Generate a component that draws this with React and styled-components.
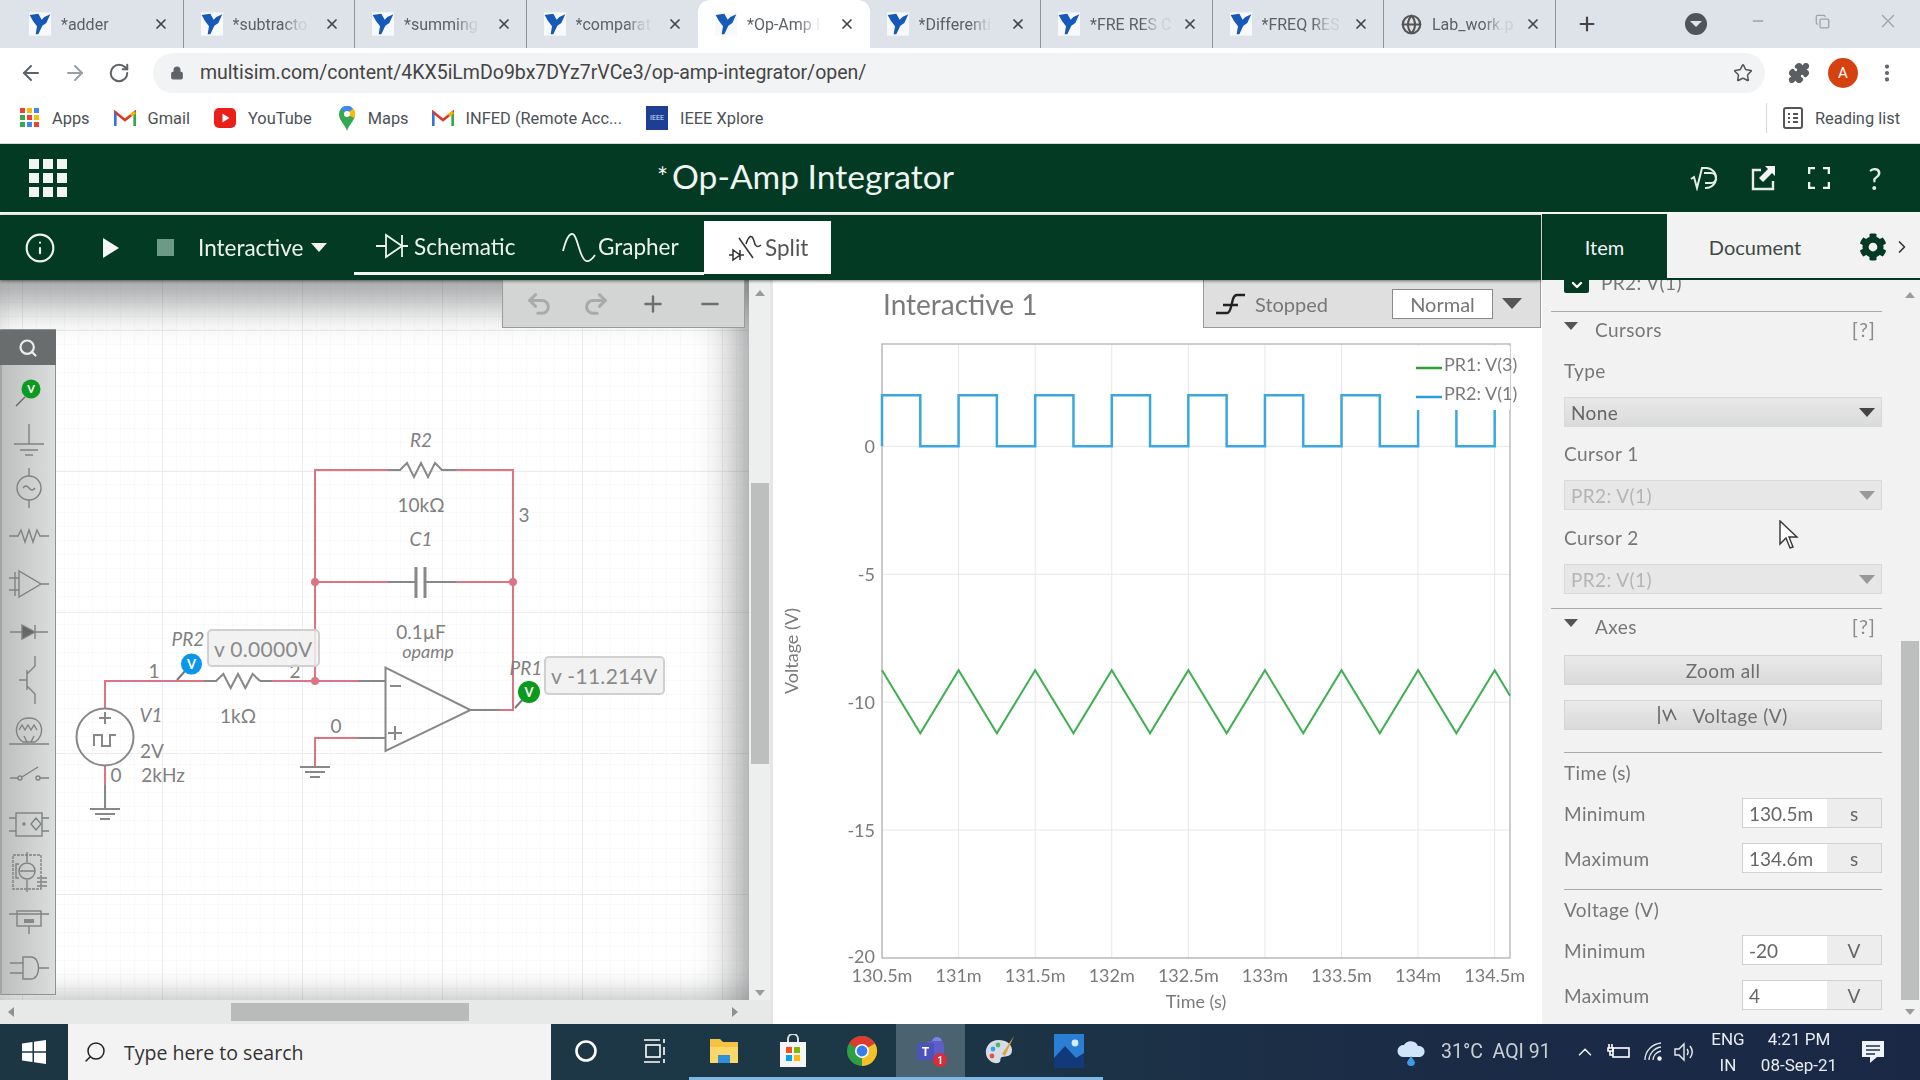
import React from "react";
import styled, { createGlobalStyle } from "styled-components";
import {
  ArrowLeft, ArrowRight, RotateCw, Lock, Star, Puzzle, MoreVertical, Plus, Minus, X,
  Search, Globe, ChevronDown, Undo2, Redo2, ChevronRight, ChevronUp, Info, Copy,
} from "lucide-react";
import { FaCog } from "react-icons/fa";

const GlobalStyle = createGlobalStyle`
  html, body { margin: 0; padding: 0; background: #fff; }
  * { box-sizing: border-box; }
`;

const GREEN = "#033a24";

const Page = styled.div`
  width: 1920px;
  height: 1080px;
  overflow: hidden;
  display: flex;
  flex-direction: column;
  font-family: "Lato", sans-serif;
  filter: blur(0.35px);
`;

/* browser chrome */
const TabStrip = styled.div`
  height: 48px;
  background: #dee3ea;
  display: flex;
  align-items: center;
  padding-left: 12px;
  font-family: "Roboto", sans-serif;
`;
const Tab = styled.div`
  width: 171.5px;
  height: 48px;
  display: flex;
  align-items: center;
  padding: 0 14px 0 17px;
  gap: 10px;
  position: relative;
  background: ${(p) => (p.$active ? "#fff" : "transparent")};
  border-radius: ${(p) => (p.$active ? "12px 12px 0 0" : "0")};
  border-right: 1px solid ${(p) => (p.$active || p.$noSep ? "transparent" : "#8f949b")};
`;
const TabText = styled.span`
  flex: 1;
  font-size: 16px;
  white-space: nowrap;
  overflow: hidden;
  color: #5c6168;
  mask-image: linear-gradient(90deg, #000 62%, rgba(0, 0, 0, .15) 84%);
`;
const NewTab = styled.div`
  width: 42px;
  margin-left: 10px;
  display: flex;
  justify-content: center;
  color: #444;
`;
const ProfileDot = styled.div`
  margin-left: auto;
  margin-right: 18px;
  width: 22px;
  height: 22px;
  border-radius: 50%;
  background: #50545a;
  display: flex;
  align-items: center;
  justify-content: center;
`;
const WinButton = styled.div`
  width: 65px;
  display: flex;
  justify-content: center;
  color: #9ca1a8;
  padding-bottom: 6px;
`;

const AddressRow = styled.div`
  height: 49px;
  background: #fff;
  display: flex;
  align-items: center;
  padding-left: 9px;
  font-family: "Roboto", sans-serif;
`;
const NavButton = styled.div`
  width: 44px;
  display: flex;
  justify-content: center;
  color: ${(p) => p.$color || "#5f6368"};
`;
const AddressBar = styled.div`
  width: 1612px;
  height: 40px;
  margin-left: 12px;
  margin-right: 12px;
  border-radius: 20px;
  background: #f1f3f4;
  display: flex;
  align-items: center;
  padding: 0 12px 0 17px;
  font-size: 19.5px;
  gap: 16px;
`;
const Url = styled.span`
  flex: 1;
  color: #444;
`;
const Avatar = styled.div`
  width: 30px;
  height: 30px;
  border-radius: 50%;
  background: #d5410f;
  color: #fff;
  font-size: 15px;
  display: flex;
  align-items: center;
  justify-content: center;
`;

const BookmarkRow = styled.div`
  height: 47px;
  background: #fff;
  display: flex;
  align-items: center;
  padding: 0 20px 4px 20px;
  font-family: "Roboto", sans-serif;
  font-size: 16.4px;
  color: #4d5156;
  border-bottom: 1px solid #d6dadd;
`;
const Bookmark = styled.div`
  display: flex;
  align-items: center;
  gap: 12px;
  margin-right: ${(p) => p.$gap || 22}px;
  white-space: nowrap;
`;
const ReadingList = styled.div`
  margin-left: auto;
  display: flex;
  align-items: center;
  gap: 12px;
  border-left: 1px solid #d6dadd;
  padding-left: 16px;
  height: 30px;
`;
const IeeeBadge = styled.span`
  width: 22px;
  height: 24px;
  background: #1c3f94;
  color: #dbe4ff;
  font-size: 7px;
  display: flex;
  align-items: center;
  justify-content: center;
`;

/* app header */
const AppHeader = styled.header`
  height: 68px;
  background: ${GREEN};
  display: flex;
  align-items: center;
  padding-left: 29px;
  color: #fff;
`;
const AppGrid = styled.div`
  width: 38px;
  height: 38px;
  display: grid;
  grid-template-columns: repeat(3, 10px);
  grid-template-rows: repeat(3, 10px);
  gap: 4px;
`;
const AppGridDot = styled.span`
  background: #f2f5f3;
`;
const Title = styled.h1`
  margin: 0 0 4px 590px;
  font-weight: 400;
  font-size: 33.6px;
  color: #f1f5f2;
  white-space: nowrap;
  span { font-size: 26px; margin-right: 4px; vertical-align: 2px; }
`;
const HeaderIcons = styled.div`
  margin-left: auto;
  display: flex;
  align-items: center;
  padding-right: 17px;
`;
const HeaderIcon = styled.div`
  width: 56px;
  display: flex;
  justify-content: center;
  font-size: 30px;
  color: #e6ece8;
`;
const WhiteLine = styled.div`
  height: 3px;
  background: #f3f6f4;
`;

/* main */
const Main = styled.main`
  height: 809px;
  display: flex;
`;
const WorkColumn = styled.div`
  width: 1541px;
  display: flex;
  flex-direction: column;
`;
const ModeBar = styled.div`
  height: 65px;
  background: ${GREEN};
  display: flex;
  align-items: flex-start;
  color: #eef3f0;
  font-size: 22.5px;
  box-shadow: 0 1px 3px rgba(0, 0, 0, .5);
  position: relative;
  z-index: 2;
`;
const ModeIcon = styled.div`
  width: ${(p) => p.$w}px;
  height: 65px;
  display: flex;
  align-items: center;
  justify-content: center;
  flex: none;
`;
const StopBox = styled.div`
  width: 17px;
  height: 17px;
  background: #6d9a86;
`;
const Caret = styled.span`
  width: 0;
  height: 0;
  border-left: ${(p) => p.$s || 8}px solid transparent;
  border-right: ${(p) => p.$s || 8}px solid transparent;
  border-top: ${(p) => (p.$s || 8) * 1.15}px solid ${(p) => p.$color || "#eef3f0"};
  flex: none;
`;
const InteractiveLabel = styled.div`
  width: 166px;
  height: 65px;
  padding-left: 10px;
  display: flex;
  align-items: center;
  gap: 8px;
  flex: none;
`;
const ViewGroup = styled.div`
  display: flex;
  height: 60px;
  width: 350px;
  padding-top: 5px;
  border-bottom: 3px solid #f3f6f4;
  flex: none;
`;
const ViewTab = styled.div`
  display: flex;
  align-items: center;
  gap: ${(p) => p.$gap}px;
  padding-left: ${(p) => p.$pad}px;
  width: ${(p) => p.$w}px;
`;
const SplitTab = styled.div`
  width: 127px;
  height: 53px;
  margin-top: 6px;
  background: #fff;
  color: #555;
  display: flex;
  align-items: center;
  padding-left: 25px;
  gap: 3px;
`;
const Panes = styled.div`
  flex: 1;
  display: flex;
  min-height: 0;
`;

/* schematic pane */
const CircuitPane = styled.section`
  width: 770px;
  display: flex;
  flex-direction: column;
  background: #e9ebea;
`;
const CircuitRow = styled.div`
  height: 720px;
  display: flex;
`;
const Viewport = styled.div`
  width: 749px;
  height: 720px;
  position: relative;
  overflow: hidden;
  background-color: #fff;
  background-image:
    linear-gradient(#ececec 1px, transparent 1px),
    linear-gradient(90deg, #ececec 1px, transparent 1px),
    linear-gradient(rgba(0,0,0,.018) 1px, transparent 1px),
    linear-gradient(90deg, rgba(0,0,0,.018) 1px, transparent 1px);
  background-size: 140px 141px, 140px 141px, 14px 14px, 14px 14px;
  background-position: 22px 50px, 22px 50px, 22px 50px, 22px 50px;
  box-shadow:
    inset 0 44px 36px -18px rgba(80, 84, 86, .5),
    inset -44px 0 36px -26px rgba(80, 84, 86, .42),
    inset 0 -26px 26px -18px rgba(80, 84, 86, .3);
`;
const CircuitSvg = styled.svg`
  position: absolute;
  left: 0;
  top: 0;
`;
const CircuitText = styled.text`
  font-family: "Lato", sans-serif;
  font-size: ${(p) => p.$size || 19}px;
  font-style: ${(p) => (p.$italic ? "italic" : "normal")};
  fill: #808080;
  text-anchor: ${(p) => p.$anchor || "middle"};
  dominant-baseline: central;
`;
const CanvasTools = styled.div`
  position: absolute;
  left: 502px;
  top: 0;
  width: 243px;
  height: 48px;
  background: #d3d4d4;
  border: 1px solid #9a9a9a;
  border-top: 0;
  display: flex;
  align-items: center;
  padding-left: 22px;
  gap: 29px;
`;
const ToolGlyph = styled.div`
  width: 28px;
  display: flex;
  justify-content: center;
  color: ${(p) => p.$color};
`;
const Palette = styled.div`
  position: absolute;
  left: 0;
  top: 49px;
  width: 56px;
  height: 666px;
  background: linear-gradient(90deg, #bdbfbf, #dcdddd);
  border: 1px solid #8e9191;
  border-left: 2px solid #a3a5a5;
`;
const PaletteSearch = styled.div`
  height: 35px;
  background: #696d6e;
  display: flex;
  align-items: center;
  justify-content: center;
  color: #eceeee;
  margin: 0 -1px 3px -2px;
`;
const PaletteCell = styled.div`
  height: 48px;
  display: flex;
  align-items: center;
  justify-content: center;
`;
const ValueTip = styled.div`
  position: absolute;
  left: ${(p) => p.$x}px;
  top: ${(p) => p.$y}px;
  width: ${(p) => p.$w}px;
  height: ${(p) => p.$h}px;
  border: 2px solid #d0d0d0;
  border-radius: 5px;
  background: rgba(240, 240, 240, .86);
  color: #8a8a8a;
  font-size: 21px;
  display: flex;
  align-items: center;
  padding-left: 5px;
  white-space: nowrap;
  letter-spacing: .3px;
`;
const VScroll = styled.div`
  width: 21px;
  height: 720px;
  display: flex;
  flex-direction: column;
  align-items: center;
  background: #ecefee;
  padding-top: 10px;
`;
const ScrollThumbV = styled.div`
  width: 18px;
  height: ${(p) => p.$h}px;
  margin-top: ${(p) => p.$top}px;
  background: #bcbfbe;
`;
const UpArrow = styled.span`
  width: 0;
  height: 0;
  border-left: 5px solid transparent;
  border-right: 5px solid transparent;
  border-bottom: 6px solid #9a9c9c;
`;
const DownArrow = styled(UpArrow)`
  margin-top: ${(p) => p.$top || 0}px;
  transform: rotate(180deg);
`;
const HScroll = styled.div`
  height: 24px;
  display: flex;
  align-items: center;
  padding-left: 8px;
  background: #e7e9e8;
`;
const ScrollThumbH = styled.div`
  width: 238px;
  height: 18px;
  margin-left: 217px;
  background: #b8bbba;
`;
const SideArrow = styled.span`
  width: 0;
  height: 0;
  border-top: 5px solid transparent;
  border-bottom: 5px solid transparent;
  border-${(p) => (p.$right ? "left" : "right")}: 6px solid #8f9191;
  margin-left: ${(p) => p.$left || 0}px;
`;

/* chart pane */
const ChartPane = styled.section`
  flex: 1;
  background: #fff;
  border-left: 3px solid #e4e6e5;
  display: flex;
  flex-direction: column;
`;
const ChartHead = styled.div`
  height: 48px;
  display: flex;
  align-items: center;
  padding-left: 110px;
`;
const ChartTitle = styled.div`
  font-size: 28px;
  color: #7b7b7b;
`;
const RunState = styled.div`
  margin-left: auto;
  width: 338px;
  height: 48px;
  background: #dfdfdf;
  border: 1px solid #9a9a9a;
  border-top: 0;
  display: flex;
  align-items: center;
  padding-left: 12px;
  font-size: 20px;
  color: #777;
`;
const RunLabel = styled.span`
  width: 137px;
  margin-left: 9px;
`;
const ModeBox = styled.div`
  width: 101px;
  height: 30px;
  background: #fff;
  border: 1px solid #8a8a8a;
  display: flex;
  align-items: center;
  justify-content: center;
  margin-right: 9px;
`;
const ChartSvg = styled.svg`
  display: block;
`;
const ChartText = styled.text`
  font-family: "Lato", sans-serif;
  font-size: 18px;
  fill: ${(p) => p.$color || "#7a7a7a"};
  text-anchor: ${(p) => p.$anchor || "middle"};
  dominant-baseline: central;
`;

/* right panel */
const SidePanel = styled.aside`
  width: 379px;
  background: #f1f2f1;
  display: flex;
  flex-direction: column;
  border-left: 1px solid #fff;
  color: #777;
  font-size: 19px;
  letter-spacing: .4px;
`;
const SideTabs = styled.div`
  height: 65px;
  display: flex;
  align-items: center;
  border-bottom: 2px solid ${GREEN};
  background: #f1f2f1;
  font-size: 20px;
  letter-spacing: 0;
`;
const SideTab = styled.div`
  width: ${(p) => p.$w}px;
  height: 65px;
  display: flex;
  align-items: center;
  justify-content: center;
  background: ${(p) => (p.$active ? GREEN : "transparent")};
  color: ${(p) => (p.$active ? "#f1f5f2" : "#3f4a45")};
`;
const GearTab = styled.div`
  width: 77px;
  height: 63px;
  padding-left: 16px;
  display: flex;
  align-items: center;
  gap: 5px;
`;
const SideRow = styled.div`
  flex: 1;
  display: flex;
  min-height: 0;
`;
const SideBody = styled.div`
  width: 358px;
  padding-left: 9px;
  position: relative;
`;
const ClippedRow = styled.div`
  height: 13px;
  overflow: hidden;
  display: flex;
  align-items: flex-end;
  padding-left: 13px;
  gap: 12px;
  color: #777;
`;
const CheckBox = styled.span`
  width: 25px;
  height: 25px;
  background: ${GREEN};
  border-radius: 2px;
  color: #fff;
  flex: none;
  display: flex;
  align-items: flex-end;
  justify-content: center;
`;
const ClippedText = styled.span`
  line-height: 18px;
  margin-bottom: 1px;
`;
const Divider = styled.hr`
  height: 1px;
  border: 0;
  background: #a9abaa;
  margin: ${(p) => p.$top || 0}px 0 0 ${(p) => p.$left || 0}px;
  width: ${(p) => 331 - (p.$left || 0)}px;
`;
const SectionHead = styled.div`
  height: 36px;
  display: flex;
  align-items: center;
  padding: 0 0 2px 13px;
  width: 331px;
`;
const SectionCaret = styled(Caret)`
  margin-bottom: 6px;
`;
const SectionName = styled.span`
  margin-left: 17px;
  flex: 1;
`;
const HelpMark = styled.span`
  font-size: 20px;
  color: #8b8b8b;
  margin-right: 6px;
  letter-spacing: 1px;
`;
const FieldLabel = styled.div`
  height: ${(p) => p.$h}px;
  margin-bottom: ${(p) => p.$after || 0}px;
  padding: 0 0 ${(p) => p.$lift || 0}px 13px;
  display: flex;
  align-items: center;
`;
const Select = styled.div`
  width: 318px;
  height: 30px;
  margin-left: 13px;
  background: ${(p) => (p.$disabled ? "#e6e7e6" : "linear-gradient(#e7e8e7, #d9dada)")};
  border: 1px solid #d8d9d8;
  display: flex;
  align-items: center;
  justify-content: space-between;
  padding: 0 6px;
  color: ${(p) => (p.$disabled ? "#b4b5b4" : "#666")};
`;
const ActionButton = styled.div`
  width: 318px;
  height: 30px;
  margin: ${(p) => p.$top}px 0 0 13px;
  background: linear-gradient(#e9eae9, #d8d9d8);
  border: 1px solid #d3d4d3;
  display: flex;
  align-items: center;
  justify-content: center;
  gap: 10px;
  color: #6f6f6f;
`;
const NumberRow = styled.div`
  height: 30px;
  width: 332px;
  margin-top: ${(p) => p.$top || 0}px;
  padding-left: 13px;
  display: flex;
  align-items: center;
`;
const NumberLabel = styled.span`
  width: 178px;
  flex: none;
`;
const NumberField = styled.div`
  width: 140px;
  height: 30px;
  border: 1px solid #d0d1d0;
  display: flex;
  background: #ecedec;
  color: #666;
  letter-spacing: 0;
`;
const NumberValue = styled.span`
  width: 84px;
  background: #fff;
  display: flex;
  align-items: center;
  padding-left: 6px;
`;
const NumberUnit = styled.span`
  flex: 1;
  display: flex;
  align-items: center;
  justify-content: center;
`;
const PointerWrap = styled.div`
  position: absolute;
  left: 237px;
  top: 240px;
`;
const SideScroll = styled.div`
  width: 21px;
  display: flex;
  flex-direction: column;
  align-items: center;
  padding-top: 12px;
`;

/* taskbar */
const Taskbar = styled.footer`
  height: 56px;
  background: linear-gradient(90deg, #1d3644 0%, #1c3746 45%, #1b2b46 75%, #1a2845 100%);
  display: flex;
  align-items: stretch;
  color: #e8edf2;
  font-family: "Roboto", sans-serif;
`;
const StartCell = styled.div`
  width: 68px;
  display: flex;
  align-items: center;
  justify-content: center;
`;
const SearchBox = styled.div`
  width: 483px;
  background: #f3f3f3;
  color: #333;
  display: flex;
  align-items: center;
  padding-left: 15px;
  gap: 17px;
  font-family: "Open Sans", sans-serif;
  font-size: 19.5px;
`;
const TaskCell = styled.div`
  width: 69px;
  display: flex;
  align-items: center;
  justify-content: center;
  background: ${(p) => (p.$active ? "#4b6270" : "transparent")};
  border-bottom: 3px solid ${(p) => (p.$running ? "#7fb8e6" : "transparent")};
`;
const Tray = styled.div`
  margin-left: auto;
  display: flex;
  align-items: stretch;
  padding-right: 11px;
  font-size: 17px;
`;
const TrayCell = styled.div`
  width: ${(p) => p.$w}px;
  display: flex;
  flex-direction: column;
  align-items: ${(p) => (p.$start ? "flex-start" : "center")};
  justify-content: center;
  padding-left: ${(p) => p.$pad || 0}px;
  line-height: 26px;
  white-space: nowrap;
  font-size: ${(p) => p.$size || 17}px;
  color: ${(p) => p.$color || "#e8edf2"};
`;

const TABS = [
  { label: "*adder" },
  { label: "*subtracto" },
  { label: "*summing" },
  { label: "*comparat", noSep: true },
  { label: "*Op-Amp I", active: true, noSep: true },
  { label: "*Differenti" },
  { label: "*FRE RES C" },
  { label: "*FREQ RES" },
  { label: "Lab_work.p", globe: true },
];

const X_TICKS = ["130.5m", "131m", "131.5m", "132m", "132.5m", "133m", "133.5m", "134m", "134.5m"];
const Y_TICKS = [0, -5, -10, -15, -20];

const px = (ms) => 882 + (ms - 130.5) * (628 / 4.1);
const py = (v) => 958 - (v + 20) * (614 / 24);

function squarePath() {
  let d = `M${px(130.5)} ${py(0)}`;
  for (let i = 0; i < 8; i++) {
    const t = 130.5 + i * 0.5;
    d += ` L${px(t)} ${py(2)} L${px(t + 0.25)} ${py(2)} L${px(t + 0.25)} ${py(0)} L${px(t + 0.5)} ${py(0)}`;
  }
  d += ` L${px(134.5)} ${py(2)} L${px(134.6)} ${py(2)}`;
  return d;
}

function trianglePath() {
  let d = `M${px(130.5)} ${py(-8.75)}`;
  for (let i = 0; i < 8; i++) {
    const t = 130.5 + i * 0.5;
    d += ` L${px(t + 0.25)} ${py(-11.22)} L${px(t + 0.5)} ${py(-8.75)}`;
  }
  d += ` L${px(134.6)} ${py(-9.75)}`;
  return d;
}

function zigzag(cx, y, half) {
  const step = (half * 2) / 6;
  const pts = [];
  for (let i = 0; i <= 6; i++) {
    const off = i === 0 || i === 6 ? 0 : i % 2 ? -7 : 7;
    pts.push(`${cx - half + i * step} ${y + off}`);
  }
  return `M${pts.join(" L")}`;
}

function Ground({ x, y }) {
  return (
    <g stroke="#888" strokeWidth="2">
      <path d={`M${x - 15} ${y} H${x + 15}`} />
      <path d={`M${x - 10} ${y + 5} H${x + 10}`} />
      <path d={`M${x - 5} ${y + 10} H${x + 5}`} />
    </g>
  );
}

function Schematic() {
  const red = "#dc7484";
  const grey = "#888";
  return (
    <CircuitSvg width="749" height="720" viewBox="0 0 749 720" fill="none">
      <g stroke={red} strokeWidth="2">
        <path d="M388 190 H315 V401" />
        <path d="M456 190 H513 V430 H500" />
        <path d="M388 302 H315" />
        <path d="M456 302 H513" />
        <path d="M105 428 V401 H204" />
        <path d="M272 401 H358" />
        <path d="M358 458 H315 V486" />
        <path d="M105 486 V505" />
      </g>
      <g stroke={grey} strokeWidth="2">
        <path d="M388 190 H401" />
        <path d={zigzag(421, 190, 21)} />
        <path d="M441 190 H456" />
        <path d="M388 302 H416" />
        <path d="M425 302 H456" />
        <path d="M416 287 V318" strokeWidth="3" />
        <path d="M425 287 V318" strokeWidth="3" />
        <path d="M204 401 H217" />
        <path d={zigzag(238, 401, 22)} />
        <path d="M260 401 H272" />
        <path d="M358 401 H385" />
        <path d="M358 458 H385" />
        <path d="M470 430 H500" />
        <path d="M385.5 387.5 V471 L470.5 430 Z" />
        <path d="M390 406 H401" />
        <path d="M388 453 H402 M395 446 V460" />
        <circle cx="105" cy="457" r="28.5" />
        <path d="M105 505 V529" />
        <path d="M99 438 H111 M105 432 V444" />
        <path d="M94 466 V455 H102 V466 H110 V455 H116" />
      </g>
      <Ground x={105} y={529} />
      <Ground x={315} y={487} />
      <circle cx="315" cy="302" r="4" fill={red} />
      <circle cx="513" cy="302" r="4" fill={red} />
      <circle cx="315" cy="401" r="4" fill={red} />

      <CircuitText x="421" y="159" $italic>R2</CircuitText>
      <CircuitText x="421" y="224">10kΩ</CircuitText>
      <CircuitText x="421" y="258" $italic>C1</CircuitText>
      <CircuitText x="524" y="234">3</CircuitText>
      <CircuitText x="421" y="351">0.1µF</CircuitText>
      <CircuitText x="428" y="371" $italic $size={18}>opamp</CircuitText>
      <CircuitText x="154" y="390">1</CircuitText>
      <CircuitText x="295" y="390">2</CircuitText>
      <CircuitText x="238" y="435">1kΩ</CircuitText>
      <CircuitText x="336" y="445">0</CircuitText>
      <CircuitText x="151" y="434" $italic>V1</CircuitText>
      <CircuitText x="152" y="470">2V</CircuitText>
      <CircuitText x="116" y="494">0</CircuitText>
      <CircuitText x="163" y="494">2kHz</CircuitText>
      <CircuitText x="188" y="358" $italic>PR2</CircuitText>
      <CircuitText x="526" y="387" $italic>PR1</CircuitText>

      <path d="M177 400 L186 390" stroke="#777" strokeWidth="2" />
      <circle cx="191.5" cy="384" r="10.5" fill="#0a96ea" />
      <text x="191.5" y="389" textAnchor="middle" fontFamily="Lato" fontWeight="700" fontSize="13" fill="#fff">V</text>
      <path d="M515 428 L524 418" stroke="#777" strokeWidth="2" />
      <circle cx="529" cy="412" r="11" fill="#0b9a1c" />
      <text x="529" y="417" textAnchor="middle" fontFamily="Lato" fontWeight="700" fontSize="13" fill="#fff">V</text>
    </CircuitSvg>
  );
}

function PaletteIcon({ kind }) {
  const common = { width: 44, height: 44, viewBox: "0 0 44 44", fill: "none", stroke: "#7f8282", strokeWidth: 1.4 };
  if (kind === "probe")
    return (
      <svg {...common}>
        <path d="M9 36 L18 27" stroke="#666" />
        <circle cx="24" cy="19" r="9.5" fill="#0c9a20" stroke="none" />
        <text x="24" y="23" textAnchor="middle" fontFamily="Lato" fontWeight="700" fontSize="11" fill="#fff" stroke="none">V</text>
      </svg>
    );
  if (kind === "ground")
    return (
      <svg {...common}>
        <path d="M22 6 V26 M7 26 H37 M13 32 H31 M18 37 H26" />
      </svg>
    );
  if (kind === "source")
    return (
      <svg {...common}>
        <circle cx="22" cy="22" r="12" />
        <path d="M22 2 V10 M22 34 V42 M16 22 q3 -4 6 0 t6 0" />
      </svg>
    );
  if (kind === "resistor")
    return (
      <svg {...common}>
        <path d="M2 22 H11 L14 16 L18 28 L22 16 L26 28 L30 16 L33 22 H42" />
      </svg>
    );
  if (kind === "opamp")
    return (
      <svg {...common}>
        <path d="M12 9 V35 L34 22 Z M2 16 H12 M2 28 H12 M34 22 H42 M8 10 V34" />
      </svg>
    );
  if (kind === "diode")
    return (
      <svg {...common}>
        <path d="M3 22 H41" />
        <path d="M15 15 L28 22 L15 29 Z" fill="#666" />
        <path d="M28 15 V29" />
      </svg>
    );
  if (kind === "bjt")
    return (
      <svg {...common} height="52" viewBox="0 -4 44 52">
        <path d="M12 22 H20 M20 12 V32 M20 16 L28 8 V-2 M20 28 L28 36 V46" />
      </svg>
    );
  if (kind === "lamp")
    return (
      <svg {...common}>
        <path d="M2 38 H42" />
        <path d="M16 36 C6 30 7 12 22 12 C37 12 38 30 28 36 Z" />
        <path d="M12 24 l3 -5 l3 5 l3 -5 l3 5 l3 -5 l3 5 M17 30 l3 6 M27 30 l-3 6" />
      </svg>
    );
  if (kind === "switch")
    return (
      <svg {...common}>
        <path d="M3 24 H11 M15 23 L31 13 M33 24 H42" />
        <circle cx="13" cy="24" r="2" />
        <circle cx="31" cy="24" r="2" />
      </svg>
    );
  if (kind === "controlled")
    return (
      <svg {...common}>
        <rect x="9" y="11" width="26" height="23" />
        <path d="M2 16 H9 M2 29 H9 M35 16 H42 M35 29 H42 M24 22 L29 16 L34 22 L29 28 Z" />
        <circle cx="17" cy="22" r="1" />
      </svg>
    );
  if (kind === "module")
    return (
      <svg {...common}>
        <rect x="6" y="5" width="28" height="34" strokeDasharray="3 1" />
        <circle cx="20" cy="21" r="8" />
        <path d="M12 21 H28 M20 2 V12 M20 30 V42 M30 28 H40 M30 32 H40 M30 36 H40 M12 14 H9 V28 H12" />
      </svg>
    );
  if (kind === "ic")
    return (
      <svg {...common}>
        <rect x="10" y="13" width="24" height="15" />
        <path d="M2 16 H42 M22 28 V36" />
        <rect x="17" y="21" width="10" height="4" fill="#888" stroke="none" />
      </svg>
    );
  return (
    <svg {...common}>
      <path d="M16 11 H24 C34 11 34 33 24 33 H16 Z M3 17 H16 M3 27 H16 M31 22 H42" />
    </svg>
  );
}

function MultisimLogo() {
  return (
    <svg width="22" height="24" viewBox="0 0 66 70" style={{ flex: "none" }}>
      <rect width="66" height="70" fill="#f7f9fc" />
      <path d="M2 8 L28 4 L38 22 L46 14 L64 6 L52 32 L40 40 L28 66 L20 66 L24 42 L12 26 Z" fill="#1659b8" />
    </svg>
  );
}

function GmailIcon() {
  return (
    <svg width="22" height="17" viewBox="0 0 22 17" fill="none">
      <path d="M1 16 V2 L11 10 L21 2 V16" stroke="#d93a2d" strokeWidth="2.6" />
      <path d="M1 16 V3" stroke="#2a77e0" strokeWidth="3" />
      <path d="M21 16 V3" stroke="#2fa84f" strokeWidth="3" />
      <path d="M17 5.5 L21 2" stroke="#f4b400" strokeWidth="3" />
    </svg>
  );
}

function ChromeIcon() {
  return (
    <svg width="32" height="32" viewBox="0 0 32 32">
      <circle cx="16" cy="16" r="15" fill="#2f9e44" />
      <path d="M16 1 A15 15 0 0 1 29 8.5 L16 16 L3 8.5 A15 15 0 0 1 16 1" fill="#dc3b2e" />
      <path d="M29 8.5 A15 15 0 0 1 16 31 L16 16 Z" fill="#f6c026" />
      <circle cx="16" cy="16" r="7" fill="#fff" />
      <circle cx="16" cy="16" r="5.4" fill="#3b7de8" />
    </svg>
  );
}

export default function App() {
  return (
    <Page>
      <GlobalStyle />
      <TabStrip>
        {TABS.map((t) => (
          <Tab key={t.label} $active={t.active} $noSep={t.noSep}>
            {t.globe ? <Globe size={21} color="#555" strokeWidth={2.4} style={{ flex: "none" }} /> : <MultisimLogo />}
            <TabText>{t.label}</TabText>
            <X size={16} strokeWidth={2.6} color="#454545" style={{ flex: "none" }} />
          </Tab>
        ))}
        <NewTab><Plus size={22} strokeWidth={2.4} /></NewTab>
        <ProfileDot><Caret $s={6} $color="#dee3ea" /></ProfileDot>
        <WinButton><Minus size={16} /></WinButton>
        <WinButton><Copy size={15} /></WinButton>
        <WinButton><X size={22} strokeWidth={1.4} /></WinButton>
      </TabStrip>

      <AddressRow>
        <NavButton><ArrowLeft size={24} strokeWidth={2} /></NavButton>
        <NavButton $color="#9aa0a6"><ArrowRight size={24} strokeWidth={2} /></NavButton>
        <NavButton><RotateCw size={22} strokeWidth={2.2} /></NavButton>
        <AddressBar>
          <Lock size={14} fill="#5f6368" color="#5f6368" />
          <Url>multisim.com/content/4KX5iLmDo9bx7DYz7rVCe3/op-amp-integrator/open/</Url>
          <Star size={20} color="#555" strokeWidth={1.8} />
        </AddressBar>
        <NavButton $color="#5b5f63"><Puzzle size={22} fill="#5b5f63" /></NavButton>
        <NavButton><Avatar>A</Avatar></NavButton>
        <NavButton><MoreVertical size={22} strokeWidth={2.6} /></NavButton>
      </AddressRow>

      <BookmarkRow>
        <Bookmark $gap={24}>
          <svg width="20" height="20" viewBox="0 0 20 20">
            {[0, 7, 14].map((y, r) =>
              [0, 7, 14].map((x, c) => (
                <rect key={`${r}${c}`} x={x} y={y} width="5" height="5"
                  fill={["#ea4335", "#fbbc05", "#4285f4", "#34a853", "#ea4335", "#fbbc05", "#34a853", "#4285f4", "#ea4335"][r * 3 + c]} />
              ))
            )}
          </svg>
          Apps
        </Bookmark>
        <Bookmark $gap={24}><GmailIcon />Gmail</Bookmark>
        <Bookmark $gap={26}>
          <svg width="22" height="20" viewBox="0 0 22 20">
            <rect width="22" height="20" rx="5" fill="#e9201a" />
            <path d="M8.5 5.5 L15.5 10 L8.5 14.5 Z" fill="#fff" />
          </svg>
          YouTube
        </Bookmark>
        <Bookmark $gap={23}>
          <svg width="18" height="26" viewBox="0 0 18 26">
            <path d="M9 26 C7 19 1 16 1 9 A8 8 0 0 1 17 9 C17 16 11 19 9 26 Z" fill="#34a853" />
            <path d="M3 3.5 A8 8 0 0 1 15 3.5 L9 9 Z" fill="#4285f4" />
            <path d="M15 3.5 A8 8 0 0 1 16 13 L9 9 Z" fill="#fbbc05" />
            <circle cx="9" cy="9" r="3" fill="#fff" />
          </svg>
          Maps
        </Bookmark>
        <Bookmark $gap={24}><GmailIcon />INFED (Remote Acc...</Bookmark>
        <Bookmark><IeeeBadge>IEEE</IeeeBadge>IEEE Xplore</Bookmark>
        <ReadingList>
          <svg width="20" height="24" viewBox="0 0 20 24" fill="none" stroke="#555" strokeWidth="2">
            <rect x="1" y="2" width="18" height="20" rx="2" />
            <path d="M5 8 H7 M10 8 H15 M5 12 H7 M10 12 H15 M5 16 H7 M10 16 H15" />
          </svg>
          Reading list
        </ReadingList>
      </BookmarkRow>

      <AppHeader>
        <AppGrid>{Array.from({ length: 9 }, (_, i) => <AppGridDot key={i} />)}</AppGrid>
        <Title><span>*</span>Op-Amp Integrator</Title>
        <HeaderIcons>
          <HeaderIcon>
            <svg width="34" height="26" viewBox="0 0 34 26" fill="none" stroke="#e6ece8" strokeWidth="2">
              <path d="M1 14 L4 12 L7 23 L12 3 H17" />
              <path d="M17 3 A10 10 0 1 1 15 23" />
              <path d="M14 8 H21 A5 5 0 0 1 21 18 H15" />
            </svg>
          </HeaderIcon>
          <HeaderIcon>
            <svg width="24" height="26" viewBox="0 0 24 26" fill="none">
              <path d="M10 5 H2 V24 H22 V16" stroke="#e6ece8" strokeWidth="2.4" />
              <path d="M14 1 H24 V11 L21 8 L12 17 L8 13 L17 4 Z" fill="#f4f7f5" />
            </svg>
          </HeaderIcon>
          <HeaderIcon>
            <svg width="22" height="22" viewBox="0 0 22 22" fill="none" stroke="#eef2ef" strokeWidth="2.6">
              <path d="M1 7 V1 H7 M15 1 H21 V7 M21 15 V21 H15 M7 21 H1 V15" />
            </svg>
          </HeaderIcon>
          <HeaderIcon>?</HeaderIcon>
        </HeaderIcons>
      </AppHeader>
      <WhiteLine />

      <Main>
        <WorkColumn>
          <ModeBar>
            <ModeIcon $w={80}><Info size={32} strokeWidth={1.6} /></ModeIcon>
            <ModeIcon $w={62}>
              <svg width="16" height="20" viewBox="0 0 16 20"><path d="M0 0 L16 10 L0 20 Z" fill="#f3f6f4" /></svg>
            </ModeIcon>
            <ModeIcon $w={46}><StopBox /></ModeIcon>
            <InteractiveLabel>Interactive<Caret /></InteractiveLabel>
            <ViewGroup>
              <ViewTab $w={203} $pad={22} $gap={6}>
                <svg width="32" height="30" viewBox="0 0 32 30" fill="none" stroke="#eef3f0" strokeWidth="1.8">
                  <path d="M0 15 H10 M10 4 V26 L26 15 Z M26 4 V26 M26 15 H32" />
                </svg>
                Schematic
              </ViewTab>
              <ViewTab $w={147} $pad={5} $gap={2}>
                <svg width="34" height="34" viewBox="0 0 34 34" fill="none" stroke="#eef3f0" strokeWidth="1.8">
                  <path d="M1 22 C5 6 9 3 12 6 C16 10 18 30 24 32 C28 33 31 29 33 26" />
                </svg>
                Grapher
              </ViewTab>
            </ViewGroup>
            <SplitTab>
              <svg width="33" height="28" viewBox="0 0 33 28" fill="none" stroke="#333" strokeWidth="1.5">
                <path d="M0 21 H4 M4 16 V26 L11 21 Z M11 16 V26 M11 21 H15" />
                <path d="M10 4 L24 24" />
                <path d="M17 10 C20 1 23 0 25 7 C26 12 28 14 32 11" />
              </svg>
              Split
            </SplitTab>
          </ModeBar>
          <Panes>
            <CircuitPane>
              <CircuitRow>
                <Viewport>
                  <Schematic />
                  <CanvasTools>
                    <ToolGlyph $color="#a9aaaa"><Undo2 size={28} strokeWidth={2.6} /></ToolGlyph>
                    <ToolGlyph $color="#a9aaaa"><Redo2 size={28} strokeWidth={2.6} /></ToolGlyph>
                    <ToolGlyph $color="#6d6f6f"><Plus size={26} strokeWidth={2.2} /></ToolGlyph>
                    <ToolGlyph $color="#6d6f6f"><Minus size={26} strokeWidth={2.2} /></ToolGlyph>
                  </CanvasTools>
                  <Palette>
                    <PaletteSearch><Search size={20} strokeWidth={2.6} /></PaletteSearch>
                    {["probe", "ground", "source", "resistor", "opamp", "diode", "bjt", "lamp", "switch", "controlled", "module", "ic", "gate"].map((k) => (
                      <PaletteCell key={k}><PaletteIcon kind={k} /></PaletteCell>
                    ))}
                  </Palette>
                  <ValueTip $x={207} $y={349} $w={113} $h={38}>v 0.0000V</ValueTip>
                  <ValueTip $x={544} $y={376} $w={121} $h={39}>v -11.214V</ValueTip>
                </Viewport>
                <VScroll>
                  <UpArrow />
                  <ScrollThumbV $h={281} $top={187} />
                  <DownArrow $top={226} />
                </VScroll>
              </CircuitRow>
              <HScroll>
                <SideArrow />
                <ScrollThumbH />
                <SideArrow $right $left={263} />
              </HScroll>
            </CircuitPane>

            <ChartPane>
              <ChartHead>
                <ChartTitle>Interactive 1</ChartTitle>
                <RunState>
                  <svg width="30" height="24" viewBox="0 0 30 24" fill="none" stroke="#222" strokeWidth="2.4">
                    <path d="M0 21 H11 C13 21 14 19 15 15 L17 7 C18 4 19 3 21 3 H29 M7 13 H22" />
                  </svg>
                  <RunLabel>Stopped</RunLabel>
                  <ModeBox>Normal</ModeBox>
                  <Caret $s={10} $color="#555" />
                </RunState>
              </ChartHead>
              <ChartSvg width="768" height="696" viewBox="773 328 768 696" fill="none">
                {X_TICKS.map((t, i) => {
                  const x = px(130.5 + i * 0.5);
                  return (
                    <g key={t}>
                      <path d={`M${x} 344 V958`} stroke="#e7e7e7" />
                      <ChartText x={x} y={975}>{t}</ChartText>
                    </g>
                  );
                })}
                {Y_TICKS.map((v) => (
                  <g key={v}>
                    <path d={`M882 ${py(v)} H1510`} stroke="#e7e7e7" />
                    <ChartText x={875} y={v === -20 ? 956 : py(v)} $anchor="end">{v}</ChartText>
                  </g>
                ))}
                <rect x="882" y="344" width="628" height="614" stroke="#bdbdbd" strokeWidth="1.5" />
                <path d={squarePath()} stroke="#3ba7de" strokeWidth="2.5" />
                <path d={trianglePath()} stroke="#3fb052" strokeWidth="2" />
                <rect x="1416" y="346" width="94" height="64" fill="#fff" />
                <path d="M1416 368 H1442" stroke="#2aa12c" strokeWidth="2.5" />
                <path d="M1416 397 H1442" stroke="#2a9ddb" strokeWidth="2.5" />
                <ChartText x={1444} y={364} $anchor="start">PR1: V(3)</ChartText>
                <ChartText x={1444} y={393} $anchor="start">PR2: V(1)</ChartText>
                <ChartText x={1196} y={1001}>Time (s)</ChartText>
                <ChartText x={791} y={651} transform="rotate(-90 791 651)">Voltage (V)</ChartText>
              </ChartSvg>
            </ChartPane>
          </Panes>
        </WorkColumn>

        <SidePanel>
          <SideTabs>
            <SideTab $w={125} $active>Item</SideTab>
            <SideTab $w={176}>Document</SideTab>
            <GearTab>
              <FaCog size={28} color={GREEN} />
              <ChevronRight size={20} color="#333" />
            </GearTab>
          </SideTabs>
          <SideRow>
            <SideBody>
              <ClippedRow>
                <CheckBox><ChevronDown size={16} strokeWidth={3.5} /></CheckBox>
                <ClippedText>PR2: V(1)</ClippedText>
              </ClippedRow>
              <Divider $top={18} />
              <SectionHead>
                <SectionCaret $s={7} $color="#555" />
                <SectionName>Cursors</SectionName>
                <HelpMark>[?]</HelpMark>
              </SectionHead>
              <FieldLabel $h={49} $lift={4}>Type</FieldLabel>
              <Select>None<Caret $s={8} $color="#444" /></Select>
              <FieldLabel $h={53}>Cursor 1</FieldLabel>
              <Select $disabled>PR2: V(1)<Caret $s={8} $color="#999" /></Select>
              <FieldLabel $h={54}>Cursor 2</FieldLabel>
              <Select $disabled>PR2: V(1)<Caret $s={8} $color="#999" /></Select>
              <Divider $top={14} />
              <SectionHead>
                <SectionCaret $s={7} $color="#555" />
                <SectionName>Axes</SectionName>
                <HelpMark>[?]</HelpMark>
              </SectionHead>
              <ActionButton $top={10}>Zoom all</ActionButton>
              <ActionButton $top={15}>
                <svg width="24" height="20" viewBox="0 0 24 20" fill="none" stroke="#666" strokeWidth="1.6">
                  <path d="M1 1 V19 M5 5 L9 15 L13 5 L18 15" />
                </svg>
                Voltage (V)
              </ActionButton>
              <Divider $top={22} $left={13} />
              <FieldLabel $h={38} $after={7}>Time (s)</FieldLabel>
              <NumberRow>
                <NumberLabel>Minimum</NumberLabel>
                <NumberField><NumberValue>130.5m</NumberValue><NumberUnit>s</NumberUnit></NumberField>
              </NumberRow>
              <NumberRow $top={15}>
                <NumberLabel>Maximum</NumberLabel>
                <NumberField><NumberValue>134.6m</NumberValue><NumberUnit>s</NumberUnit></NumberField>
              </NumberRow>
              <Divider $top={16} $left={13} />
              <FieldLabel $h={38} $after={7}>Voltage (V)</FieldLabel>
              <NumberRow>
                <NumberLabel>Minimum</NumberLabel>
                <NumberField><NumberValue>-20</NumberValue><NumberUnit>V</NumberUnit></NumberField>
              </NumberRow>
              <NumberRow $top={15}>
                <NumberLabel>Maximum</NumberLabel>
                <NumberField><NumberValue>4</NumberValue><NumberUnit>V</NumberUnit></NumberField>
              </NumberRow>
              <PointerWrap>
                <svg width="20" height="30" viewBox="0 0 20 30">
                  <path d="M1 1 V24 L7 18 L11 28 L14 27 L10 17 L18 17 Z" fill="#fff" stroke="#333" strokeWidth="1.4" />
                </svg>
              </PointerWrap>
            </SideBody>
            <SideScroll>
              <UpArrow />
              <ScrollThumbV $h={359} $top={343} />
              <DownArrow $top={9} />
            </SideScroll>
          </SideRow>
        </SidePanel>
      </Main>

      <Taskbar>
        <StartCell>
          <svg width="24" height="24" viewBox="0 0 24 24" fill="#fff">
            <path d="M0 3.5 L10.5 2 V11.3 H0 Z M12 1.8 L24 0 V11.3 H12 Z M0 12.7 H10.5 V22 L0 20.5 Z M12 12.7 H24 V24 L12 22.2 Z" />
          </svg>
        </StartCell>
        <SearchBox>
          <Search size={24} strokeWidth={1.5} color="#222" style={{ transform: "scaleX(-1)" }} />
          Type here to search
        </SearchBox>
        <TaskCell>
          <svg width="24" height="24" viewBox="0 0 24 24" fill="none" stroke="#fff" strokeWidth="2.6"><circle cx="12" cy="12" r="9.5" /></svg>
        </TaskCell>
        <TaskCell>
          <svg width="24" height="28" viewBox="0 0 24 28" fill="none" stroke="#fff" strokeWidth="1.6">
            <rect x="3" y="8" width="14" height="12" />
            <path d="M1 3 H17 M1 25 H17 M21 2 V6 M21 10 V18 M21 22 V26" />
          </svg>
        </TaskCell>
        <TaskCell $running>
          <svg width="30" height="30" viewBox="0 0 30 30">
            <path d="M1 3 H11 L14 6 H29 V27 H1 Z" fill="#f5c242" />
            <rect x="1" y="11" width="28" height="16" fill="#f9d769" />
            <rect x="9" y="19" width="12" height="8" fill="#2f8fd8" />
          </svg>
        </TaskCell>
        <TaskCell $running>
          <svg width="28" height="34" viewBox="0 0 28 34" fill="none">
            <path d="M9 9 V5 A5 5 0 0 1 19 5 V9" stroke="#ddd" strokeWidth="2" />
            <rect x="1" y="8" width="26" height="25" fill="#f5f5f5" />
            <rect x="7" y="13" width="6" height="6" fill="#f25022" />
            <rect x="15" y="13" width="6" height="6" fill="#7fba00" />
            <rect x="7" y="21" width="6" height="6" fill="#00a4ef" />
            <rect x="15" y="21" width="6" height="6" fill="#ffb900" />
          </svg>
        </TaskCell>
        <TaskCell $running><ChromeIcon /></TaskCell>
        <TaskCell $running $active>
          <svg width="34" height="34" viewBox="0 0 34 34">
            <circle cx="23" cy="8" r="5" fill="#7b83eb" />
            <rect x="13" y="7" width="17" height="19" rx="4" fill="#5b5fc7" />
            <rect x="3" y="9" width="17" height="17" rx="2" fill="#4b53bc" />
            <text x="11.5" y="22" textAnchor="middle" fontFamily="Roboto" fontWeight="700" fontSize="12" fill="#fff">T</text>
            <circle cx="26" cy="26" r="7" fill="#d92d3a" />
            <text x="26" y="30" textAnchor="middle" fontFamily="Roboto" fontWeight="700" fontSize="10" fill="#fff">1</text>
          </svg>
        </TaskCell>
        <TaskCell $running>
          <svg width="32" height="32" viewBox="0 0 32 32">
            <path d="M15 5 C5 5 1 13 2 19 C3 25 9 29 14 28 C18 27 15 23 18 22 C22 21 28 22 28 15 C28 9 22 5 15 5 Z" fill="#d5dde6" />
            <circle cx="9" cy="14" r="2.4" fill="#3fa0e8" />
            <circle cx="14" cy="10" r="2.4" fill="#57b560" />
            <circle cx="8" cy="21" r="2.4" fill="#e5533d" />
            <path d="M30 1 L18 19 L21 21 Z" fill="#e2a33a" />
          </svg>
        </TaskCell>
        <TaskCell $running>
          <svg width="30" height="34" viewBox="0 0 30 34">
            <rect x="0" y="0" width="30" height="34" fill="#2a7ed3" />
            <circle cx="21" cy="9" r="3.4" fill="#d7ecff" />
            <path d="M0 34 V24 L11 12 L22 24 L30 19 V34 Z" fill="#123a7a" />
          </svg>
        </TaskCell>
        <Tray>
          <TrayCell $w={32}>
            <svg width="30" height="28" viewBox="0 0 30 28">
              <path d="M7 19 A6 6 0 0 1 8 7 A8 8 0 0 1 22 8 A5.5 5.5 0 0 1 24 19 Z" fill="#cfe6fa" />
              <path d="M15 18 L19 24 A4 4 0 0 1 11 24 Z" fill="#3f9be4" />
            </svg>
          </TrayCell>
          <TrayCell $w={138} $start $pad={14} $size={19.5} $color="#c9cfd6">31°C&nbsp; AQI 91</TrayCell>
          <TrayCell $w={40}><ChevronUp size={22} strokeWidth={1.8} /></TrayCell>
          <TrayCell $w={28}>
            <svg width="24" height="18" viewBox="0 0 24 18" fill="none" stroke="#fff" strokeWidth="1.6">
              <rect x="6" y="5" width="16" height="9" />
              <path d="M2 1 V5 M5 1 V5 M1 5 H6 V8 H1 Z M3 8 V12 H6" />
            </svg>
          </TrayCell>
          <TrayCell $w={42}>
            <svg width="20" height="20" viewBox="0 0 20 20" fill="none" stroke="#dfe4ea" strokeWidth="1.3">
              <path d="M1 18 C1 9 8 2 17 1 M5 18 C5 12 10 6 17 5 M9 18 C9 14 12 10 17 9" />
              <circle cx="15.5" cy="16.5" r="2.2" fill="#fff" stroke="none" />
            </svg>
          </TrayCell>
          <TrayCell $w={20}>
            <svg width="24" height="22" viewBox="0 0 24 22" fill="none" stroke="#e8edf2" strokeWidth="1.4" style={{ flex: "none" }}>
              <path d="M2 8 H6 L11 3 V19 L6 14 H2 Z M14 8 C15.5 10 15.5 12 14 14 M17 5 C20 9 20 13 17 17" />
            </svg>
          </TrayCell>
          <TrayCell $w={66}><span>ENG</span><span>IN</span></TrayCell>
          <TrayCell $w={76}><span>4:21 PM</span><span>08-Sep-21</span></TrayCell>
          <TrayCell $w={72}>
            <svg width="24" height="24" viewBox="0 0 24 24">
              <path d="M1 1 H23 V17 H16 L9 23 V17 H1 Z" fill="#f0f3f6" />
              <path d="M5 6 H19 M5 10 H19 M5 14 H14" stroke="#23314b" strokeWidth="1.6" />
            </svg>
          </TrayCell>
        </Tray>
      </Taskbar>
    </Page>
  );
}
